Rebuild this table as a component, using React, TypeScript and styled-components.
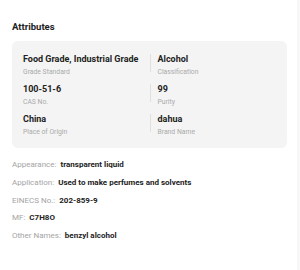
import React from 'react';
import styled, { createGlobalStyle } from 'styled-components';

const attributes = [
  { value: 'Food Grade, Industrial Grade', label: 'Grade Standard' },
  { value: 'Alcohol', label: 'Classification' },
  { value: '100-51-6', label: 'CAS No.' },
  { value: '99', label: 'Purity' },
  { value: 'China', label: 'Place of Origin' },
  { value: 'dahua', label: 'Brand Name' },
];

const details = [
  { name: 'Appearance:', value: 'transparent liquid' },
  { name: 'Application:', value: 'Used to make perfumes and solvents' },
  { name: 'EINECS No.:', value: '202-859-9' },
  { name: 'MF:', value: 'C7H8O' },
  { name: 'Other Names:', value: 'benzyl alcohol' },
];

const App = () => {
  return (
    <>
      <GlobalStyle />
      <Panel>
        <Title>Attributes</Title>
        <Card>
          {attributes.map((a, i) => (
            <Cell key={a.label} $right={i % 2 === 1}>
              <Value>{a.value}</Value>
              <Label>{a.label}</Label>
            </Cell>
          ))}
        </Card>
        <List>
          {details.map((d) => (
            <Line key={d.name}>
              <Name>{d.name}</Name>
              <Strong>{d.value}</Strong>
            </Line>
          ))}
        </List>
      </Panel>
    </>
  );
};

export default App;

const GlobalStyle = createGlobalStyle`
  body {
    margin: 0;
    background: #f7f7f7;
    font-family: Roboto, "Liberation Sans", sans-serif;
  }
`;

const Panel = styled.div`
  width: 297px;
  height: 270px;
  box-sizing: border-box;
  background: #fff;
  padding: 20px 10px 0 12px;
`;

const Title = styled.h3`
  margin: 0;
  font-size: 9.5px;
  font-weight: 700;
  color: #222;
  line-height: 14px;
`;

const Card = styled.div`
  margin-top: 7px;
  background: #f4f4f4;
  border-radius: 6px;
  padding: 12px 11px 10px;
  display: grid;
  grid-template-columns: minmax(0, 1fr) minmax(0, 1fr);
  row-gap: 5px;
`;

const Cell = styled.div<{ $right?: boolean }>`
  position: relative;
  display: flex;
  flex-direction: column;
  ${(p) => p.$right && `
    padding-left: 8px;
    &::before {
      content: '';
      position: absolute;
      left: 0;
      top: 1px;
      height: 18px;
      border-left: 1px solid #e0e0e0;
    }
  `}
`;

const Value = styled.div`
  font-size: 9px;
  font-weight: 700;
  color: #222;
  line-height: 12px;
  white-space: nowrap;
`;

const Label = styled.div`
  font-size: 6.8px;
  color: #aaa;
  line-height: 12px;
  margin-top: 1px;
`;

const List = styled.div`
  margin-top: 11px;
  display: flex;
  flex-direction: column;
  gap: 5.75px;
`;

const Line = styled.div`
  font-size: 8px;
  line-height: 12px;
  display: flex;
  gap: 4px;
`;

const Name = styled.span`
  color: #a4a4a4;
`;

const Strong = styled.span`
  color: #222;
  font-weight: 700;
`;
